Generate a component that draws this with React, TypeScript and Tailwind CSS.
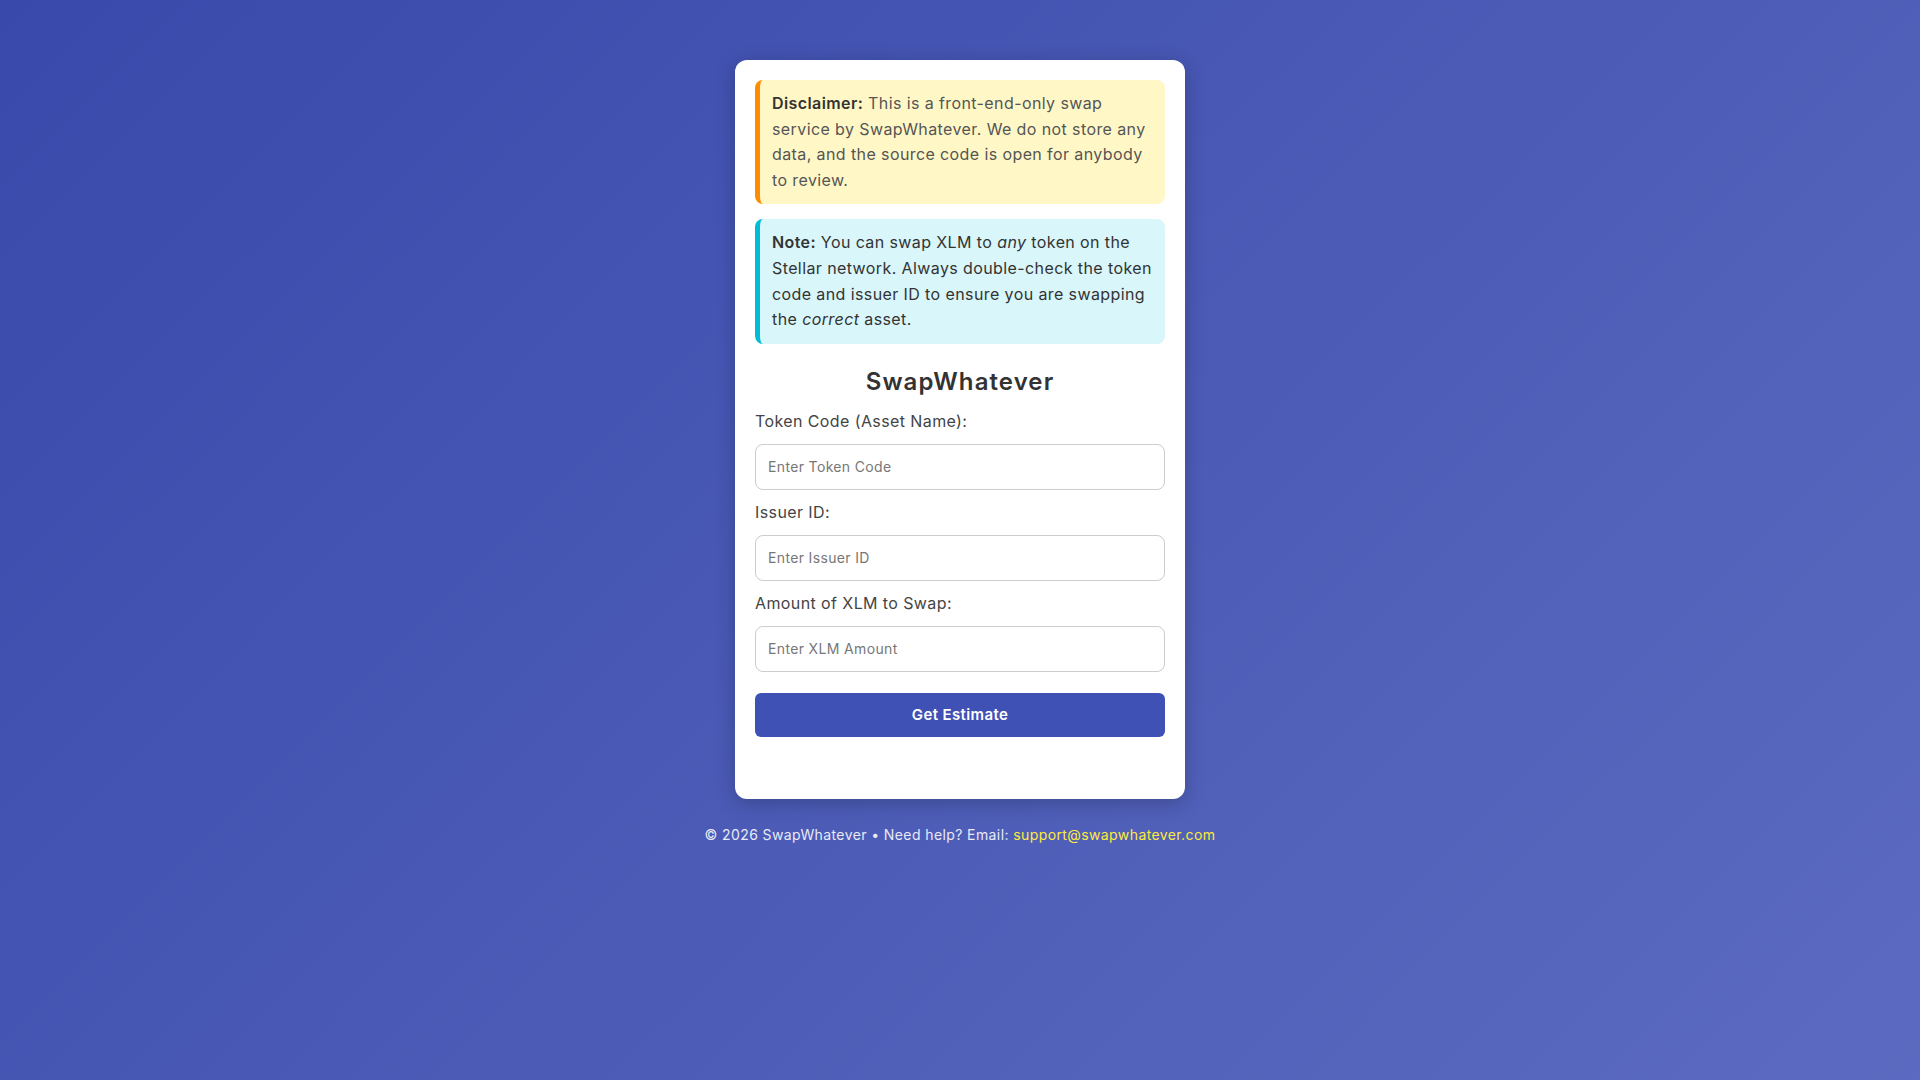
import React from "react";

export default function App() {
  return (
    <div
      className="min-h-screen w-full bg-[linear-gradient(135deg,#3949ab,#5c6bc0)] pt-[60px] pb-10 tracking-[0.025em]"
      style={{ fontFamily: "Inter, 'Noto Sans', sans-serif" }}
    >
      <div className="mx-auto w-[450px] rounded-xl bg-white px-5 pt-5 pb-[62px] shadow-[0_4px_20px_rgba(0,0,0,0.22)]">
        <div className="rounded-lg border-l-[5px] border-[#ff8c00] bg-[#fff8c6] pl-3 pr-[10px] py-[11px] text-[16px] leading-[25.6px] text-[#555]">
          <strong className="font-semibold text-[#333]">Disclaimer:</strong> This is a
          front-end-only swap service by SwapWhatever. We do not store any data, and the
          source code is open for anybody to review.
        </div>
        <div className="mt-[15px] rounded-lg border-l-[5px] border-[#00bcd4] bg-[#d9f6fa] pl-3 pr-[10px] py-[11px] text-[16px] leading-[25.6px] text-[#333]">
          <strong className="font-semibold">Note:</strong> You can swap XLM to <em>any</em> token
          on the Stellar network. Always double-check the token code and issuer ID to ensure you
          are swapping the <em>correct</em> asset.
        </div>

        <h2 className="mt-[23px] mb-3 text-center text-[24px] leading-[30px] font-semibold tracking-[0.045em] text-[#333]">
          SwapWhatever
        </h2>

        <label className="block text-[16px] leading-6 text-[#444]">Token Code (Asset Name):</label>
        <input
          className="mt-[11px] mb-[10px] block h-[46px] w-full rounded-lg border border-[#ccc] px-3 text-[14px] tracking-[0.025em] text-[#333] outline-none placeholder:text-[#777]"
          placeholder="Enter Token Code"
        />

        <label className="block text-[16px] leading-6 text-[#444]">Issuer ID:</label>
        <input
          className="mt-[11px] mb-[10px] block h-[46px] w-full rounded-lg border border-[#ccc] px-3 text-[14px] tracking-[0.025em] text-[#333] outline-none placeholder:text-[#777]"
          placeholder="Enter Issuer ID"
        />

        <label className="block text-[16px] leading-6 text-[#444]">Amount of XLM to Swap:</label>
        <input
          className="mt-[11px] block h-[46px] w-full rounded-lg border border-[#ccc] px-3 text-[14px] tracking-[0.025em] text-[#333] outline-none placeholder:text-[#777]"
          placeholder="Enter XLM Amount"
        />

        <button className="mt-[21px] block h-[44px] w-full rounded-md bg-[#3f51b5] text-[15px] font-semibold tracking-[0.025em] text-white">
          Get Estimate
        </button>
      </div>

      <p className="mt-[26px] text-center text-[14px] leading-5 text-[#e8eaf6]">
        © 2026 SwapWhatever • Need help? Email:{" "}
        <a className="text-[#ffeb3b]" href="#">
          support@swapwhatever.com
        </a>
      </p>
    </div>
  );
}
